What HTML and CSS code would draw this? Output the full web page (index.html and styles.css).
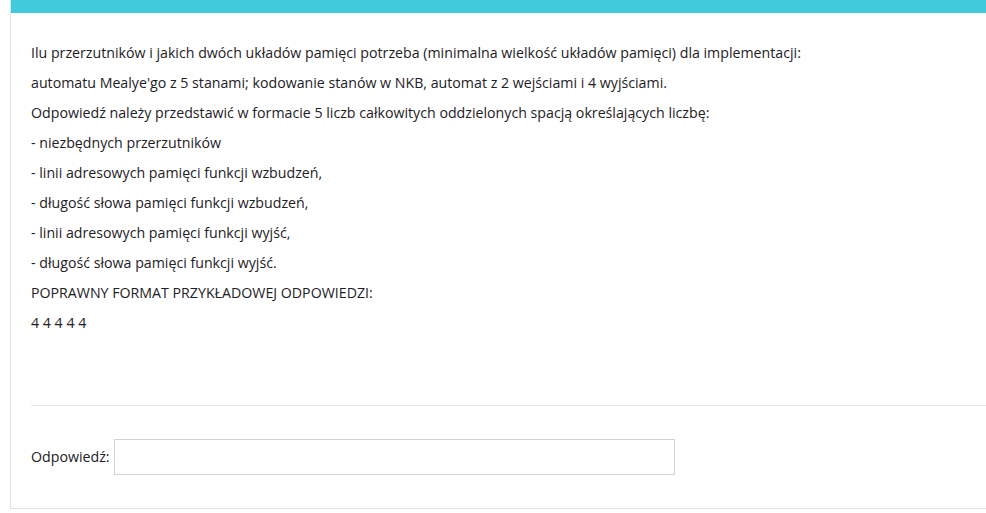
FILE: index.html
```html
<!DOCTYPE html>
<html lang="pl">
<head>
<meta charset="utf-8">
<link rel="stylesheet" href="styles.css">
</head>
<body>
<div class="card">
  <div class="card-top"></div>
  <div class="card-body">
    <div class="question">
      <p>Ilu przerzutników i jakich dwóch układów pamięci potrzeba (minimalna wielkość układów pamięci) dla implementacji:</p>
      <p>automatu Mealye'go z 5 stanami; kodowanie stanów w NKB, automat z 2 wejściami i 4 wyjściami.</p>
      <p>Odpowiedź należy przedstawić w formacie 5 liczb całkowitych oddzielonych spacją określających liczbę:</p>
      <p>- niezbędnych przerzutników</p>
      <p>- linii adresowych pamięci funkcji wzbudzeń,</p>
      <p>- długość słowa pamięci funkcji wzbudzeń,</p>
      <p>- linii adresowych pamięci funkcji wyjść,</p>
      <p>- długość słowa pamięci funkcji wyjść.</p>
      <p>POPRAWNY FORMAT PRZYKŁADOWEJ ODPOWIEDZI:</p>
      <p>4 4 4 4 4</p>
    </div>
    <div class="answer">
      <label class="answer-label" for="ans">Odpowiedź:</label>
      <input class="answer-input" id="ans" type="text">
    </div>
  </div>
</div>
</body>
</html>
```
FILE: styles.css
```css
html, body {
  margin: 0;
  padding: 0;
  background: #fff;
  overflow: hidden;
}
body {
  font-family: "Open Sans", "Noto Sans", sans-serif;
  font-size: 14.2px;
  color: #1d2125;
}
.card {
  margin-left: 10px;
  height: 509px;
  border-left: 1px solid #dee2e6;
  border-bottom: 1px solid #dee2e6;
  box-sizing: border-box;
}
.card-top {
  height: 13px;
  background: #40cadb;
}
.card-body {
  padding: 25px 0 0 20px;
}
.question {
  padding-bottom: 67px;
  border-bottom: 1px solid #e6e8ea;
}
.question p {
  margin: 0;
  line-height: 30px;
  white-space: nowrap;
}
.answer {
  display: flex;
  align-items: center;
  padding-top: 33px;
  gap: 4px;
}
.answer-label {
  line-height: 20px;
}
.answer-input {
  width: 561px;
  height: 36px;
  box-sizing: border-box;
  border: 1px solid #ced4da;
  margin: 0;
  padding: 0 8px;
  font: inherit;
}
```
